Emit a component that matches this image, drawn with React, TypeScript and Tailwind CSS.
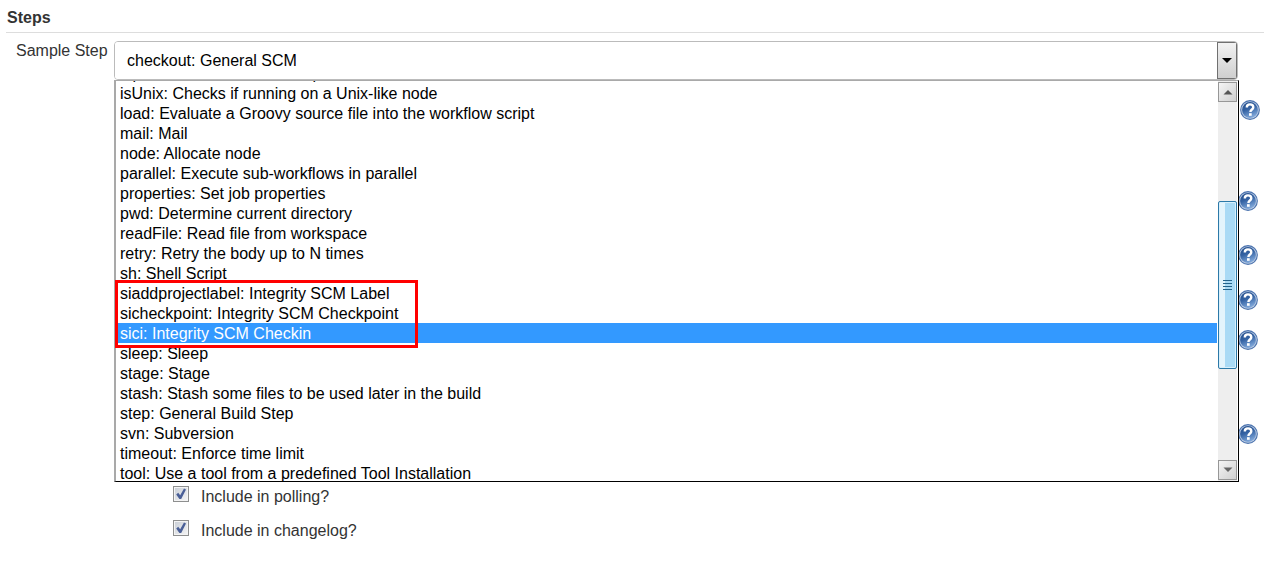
const rows = [
  "input: Wait for interactive input",
  "isUnix: Checks if running on a Unix-like node",
  "load: Evaluate a Groovy source file into the workflow script",
  "mail: Mail",
  "node: Allocate node",
  "parallel: Execute sub-workflows in parallel",
  "properties: Set job properties",
  "pwd: Determine current directory",
  "readFile: Read file from workspace",
  "retry: Retry the body up to N times",
  "sh: Shell Script",
  "siaddprojectlabel: Integrity SCM Label",
  "sicheckpoint: Integrity SCM Checkpoint",
  "sici: Integrity SCM Checkin",
  "sleep: Sleep",
  "stage: Stage",
  "stash: Stash some files to be used later in the build",
  "step: General Build Step",
  "svn: Subversion",
  "timeout: Enforce time limit",
  "tool: Use a tool from a predefined Tool Installation",
];

const active = "sici: Integrity SCM Checkin";

function HelpButton() {
  return (
    <button type="button" aria-label="Help" className="block size-5">
      <svg viewBox="0 0 20 20" className="size-5">
        <defs>
          <linearGradient id="helpFill" x1="0" y1="0" x2="0.4" y2="1">
            <stop offset="0" stopColor="#204a87" />
            <stop offset="0.5" stopColor="#3462a3" />
            <stop offset="1" stopColor="#7ba3d6" />
          </linearGradient>
        </defs>
        <circle cx="10" cy="10" r="9.9" fill="#4a72ae" />
        <circle cx="10" cy="10" r="8.8" fill="#b9cae2" />
        <circle cx="10" cy="10" r="7.9" fill="url(#helpFill)" />
        <path
          d="M6.8 7.4C6.8 5.4 8.2 4.4 10 4.4s3.3 1 3.3 2.8c0 2.3-2.9 2.3-2.9 4.8"
          fill="none"
          stroke="#fff"
          strokeWidth="2.4"
        />
        <rect x="9" y="13.2" width="2.7" height="2.6" fill="#fff" />
      </svg>
    </button>
  );
}

function CheckRow({ label }: { label: string }) {
  return (
    <label className="flex h-5 items-start gap-3">
      <span className="grid size-4">
        <input
          type="checkbox"
          defaultChecked
          className="col-start-1 row-start-1 size-4 appearance-none border border-[#8e8f8f] bg-linear-to-br from-[#c9ced6] to-[#f6f6f6] outline-1 -outline-offset-2 outline-[#f4f4f4]"
        />
        <svg viewBox="0 0 16 16" className="pointer-events-none col-start-1 row-start-1 size-4">
          <path d="M3.2 8.4l2-1.6 2 2.4L11 2.6l2 .9-4.8 9.4H6.4z" fill="#4a5f97" />
        </svg>
      </span>
      <span className="leading-[22px]">{label}</span>
    </label>
  );
}

function Scrollbar() {
  return (
    <div aria-hidden="true" className="flex w-[19px] flex-col bg-[#eeeeee] py-px">
      <div className="flex h-5 items-center justify-center border border-[#979797] bg-linear-to-br from-[#f5f5f5] to-[#cfcfcf]">
        <svg viewBox="0 0 10 6" className="h-1.5 w-2.5">
          <path d="M0.5 5.5L5 1l4.5 4.5z" fill="#555" />
        </svg>
      </div>
      <div className="grow-[99]" />
      <div className="flex h-[168px] items-center justify-center rounded-xs border border-[#2c79a8] bg-linear-to-r from-[#e3f4fc] from-35% to-[#a9daf5] to-35% shadow-[inset_0_0_0_1px_#d8f0fc]">
        <svg viewBox="0 0 10 10" className="size-2.5">
          <path d="M0 .5h9M0 3.5h9M0 6.5h9M0 9.5h9" stroke="#24648c" />
        </svg>
      </div>
      <div className="grow-[91]" />
      <div className="flex h-5 items-center justify-center border border-[#979797] bg-linear-to-br from-[#f5f5f5] to-[#cfcfcf]">
        <svg viewBox="0 0 10 6" className="h-1.5 w-2.5">
          <path d="M0.5 0.5L5 5l4.5-4.5z" fill="#666" />
        </svg>
      </div>
    </div>
  );
}

export default function App() {
  return (
    <main className="bg-white pr-2 pb-4 pl-1.5 font-['Liberation_Sans',Arial,sans-serif] text-base text-[#333]">
      <h2 className="border-b border-[#ddd] pt-[7px] pb-[3px] pl-px leading-[22px] font-bold">
        Steps
      </h2>

      <div className="flex pt-2">
        <label htmlFor="step" className="w-[108px] shrink-0 pl-2.5 leading-5">
          Sample Step
        </label>
        <div className="relative mr-[26px] min-w-0 flex-1">
          <div className="flex h-[39px] overflow-hidden rounded-sm border border-[#bbb]">
            <select
              id="step"
              defaultValue="checkout"
              className="min-w-0 flex-1 appearance-none bg-white pl-3 text-black"
            >
              <option value="checkout">checkout: General SCM</option>
            </select>
            <span
              aria-hidden="true"
              className="flex w-5 items-center justify-center border border-[#707070] bg-linear-to-b from-[#f2f2f2] to-[#cfcfcf]"
            >
              <svg viewBox="0 0 10 5" className="h-[5px] w-2.5">
                <path d="M0 0h10L5 5z" fill="#000" />
              </svg>
            </span>
          </div>

          <div className="absolute top-full -right-px left-0 z-10 flex h-[402px] border-t border-r border-b border-l-2 border-t-[#a9a9a9] border-r-black border-b-black border-l-[#a9a9a9] bg-white pr-px">
            <ul
              role="listbox"
              aria-label="Steps"
              className="min-w-0 flex-1 overflow-hidden pr-px text-black"
            >
              {rows.map((row) => (
                <li
                  key={row}
                  role="option"
                  aria-selected={row === active}
                  className="h-5 pl-1 leading-[22px] whitespace-nowrap first:-mt-[18px] aria-selected:bg-[#3399ff] aria-selected:text-white"
                >
                  {row}
                </li>
              ))}
            </ul>
            <Scrollbar />
            <div className="pointer-events-none absolute top-[199px] -left-px h-[68px] w-[303px] border-3 border-[#f00]" />
          </div>
        </div>
      </div>

      <div className="flex flex-col items-end pt-5 pr-1.5">
        <div className="-mr-0.5 pb-[71px]">
          <HelpButton />
        </div>
        <div className="pb-[34px]">
          <HelpButton />
        </div>
        <div className="pb-[25px]">
          <HelpButton />
        </div>
        <div className="pb-5">
          <HelpButton />
        </div>
        <div className="pb-[74px]">
          <HelpButton />
        </div>
        <HelpButton />
      </div>

      <div className="flex flex-col items-start gap-3.5 pt-[42px] pl-[167px]">
        <CheckRow label="Include in polling?" />
        <CheckRow label="Include in changelog?" />
      </div>
    </main>
  );
}
